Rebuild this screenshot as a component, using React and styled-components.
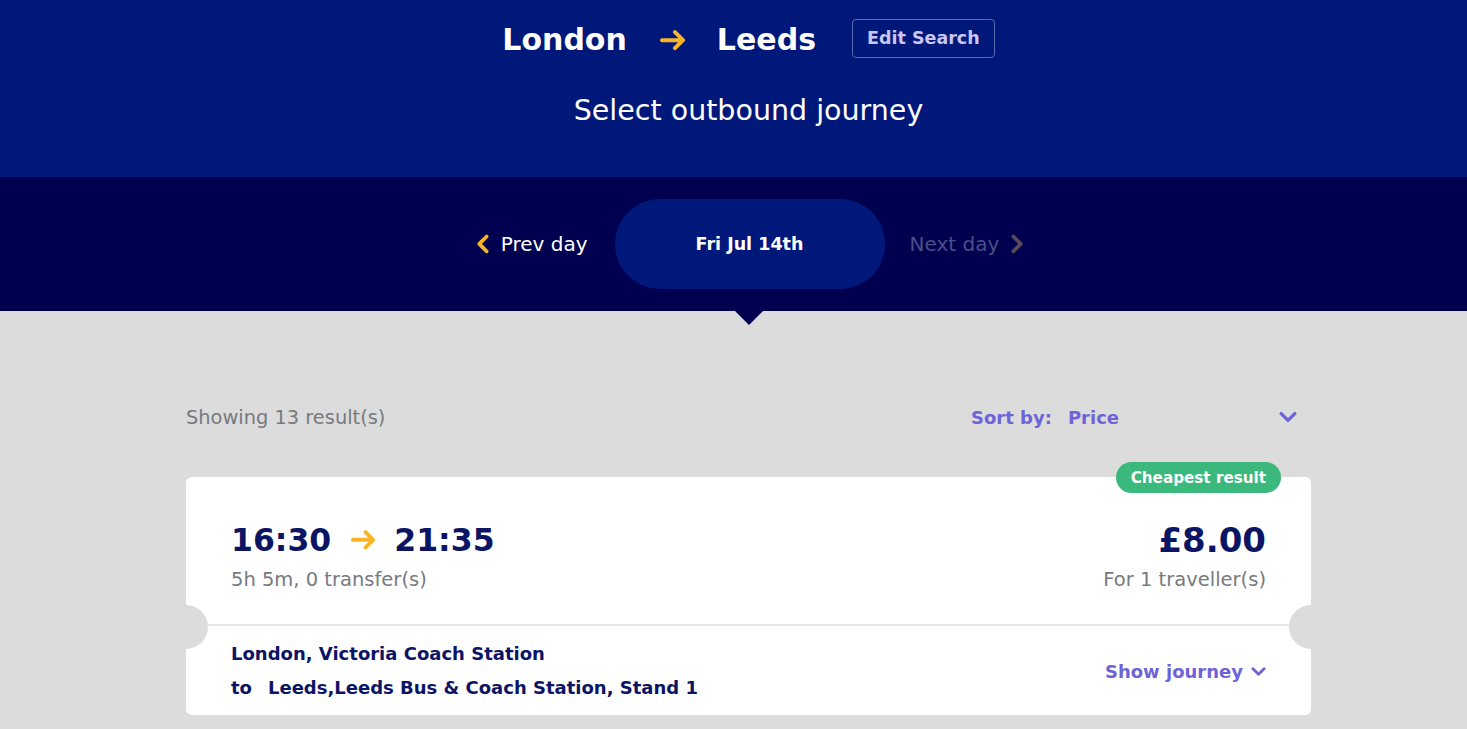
import React from "react";
import styled, { createGlobalStyle } from "styled-components";

const Global = createGlobalStyle`
  html, body { margin: 0; padding: 0; overflow: hidden; background: #dcdcdc; }
  body { font-family: "DejaVu Sans", "Open Sans", sans-serif; }
`;

const Page = styled.div`
  width: 1497px;
  min-height: 729px;
  background: #dcdcdc;
`;

const Hero = styled.header`
  background: #00187a;
  height: 177px;
  display: flex;
  flex-direction: column;
  align-items: center;
  padding-top: 18px;
  box-sizing: border-box;
`;

const RouteRow = styled.div`
  display: flex;
  align-items: center;
  height: 40px;
`;

const City = styled.h1`
  margin: 0;
  font-size: 30px;
  line-height: 40px;
  font-weight: 700;
  color: #fff;
  position: relative;
  top: 2px;
`;

const ArrowWrap = styled.span`
  display: inline-flex;
  margin: ${(p) => p.$top || 0}px ${(p) => p.$left || 30}px 0 ${(p) => p.$right || 30}px;
`;

const EditButton = styled.button`
  margin-left: 36px;
  height: 39px;
  padding: 0 14px;
  background: transparent;
  border: 1px solid #5b68b4;
  border-radius: 4px;
  color: #c9c6f6;
  font-family: inherit;
  font-size: 17.5px;
  font-weight: 700;
`;

const Subtitle = styled.h2`
  margin: 35px 0 0;
  font-size: 28.5px;
  line-height: 36px;
  font-weight: 400;
  color: #fff;
`;

const DayBar = styled.nav`
  position: relative;
  background: #000050;
  height: 134px;
  display: flex;
  align-items: center;
  justify-content: center;
`;

const DayLink = styled.span`
  display: inline-flex;
  align-items: center;
  gap: 9px;
  font-size: 20px;
  color: ${(p) => (p.$disabled ? "#4a4f85" : "#fff")};
  width: 150px;
  justify-content: ${(p) => (p.$end ? "flex-start" : "flex-end")};
  padding: ${(p) => (p.$end ? "0 0 0 25px" : "0 27px 0 0")};
`;

const DayPill = styled.div`
  width: 270px;
  height: 90px;
  border-radius: 45px;
  background: #00187a;
  color: #fff;
  font-size: 17.5px;
  font-weight: 700;
  display: flex;
  align-items: center;
  justify-content: center;
`;

const Pointer = styled.span`
  position: absolute;
  left: 50%;
  bottom: -14px;
  transform: translateX(-50%);
  width: 0;
  height: 0;
  border-left: 14px solid transparent;
  border-right: 14px solid transparent;
  border-top: 14px solid #000050;
`;

const Results = styled.main`
  width: 1125px;
  margin: 0 auto;
  padding-top: 92px;
`;

const ResultsHead = styled.div`
  display: flex;
  justify-content: space-between;
  align-items: center;
  height: 28px;
`;

const Count = styled.span`
  font-size: 19.4px;
  color: #777a80;
`;

const Sort = styled.div`
  display: flex;
  align-items: center;
  width: 340px;
  color: #6e64d8;
  font-size: 18px;
  font-weight: 700;
  padding-right: 14px;
  box-sizing: border-box;
`;

const SortValue = styled.span`
  margin-left: 16px;
  flex: 1;
`;

const Card = styled.article`
  position: relative;
  margin-top: 46px;
  background: #fff;
  border-radius: 6px;
`;

const Badge = styled.span`
  position: absolute;
  top: -15px;
  right: 30px;
  height: 31px;
  padding: 0 15px;
  border-radius: 16px;
  background: #3bb87b;
  color: #fff;
  font-size: 15.2px;
  font-weight: 700;
  display: flex;
  align-items: center;
`;

const CardTop = styled.div`
  display: flex;
  justify-content: space-between;
  padding: 41px 23px 0;
  height: 149px;
  box-sizing: border-box;
  border-bottom: 2px solid #e6e6e6;
  margin: 0 22px;
`;

const Column = styled.div`
  display: flex;
  flex-direction: column;
  align-items: ${(p) => (p.$right ? "flex-end" : "flex-start")};
`;

const Big = styled.div`
  display: flex;
  align-items: center;
  font-size: ${(p) => p.$size || 32}px;
  font-weight: 700;
  color: #0c1464;
  line-height: 44px;
`;

const Muted = styled.div`
  margin-top: 6px;
  font-size: 19.5px;
  line-height: 24px;
  color: #777a80;
`;

const Notch = styled.span`
  position: absolute;
  top: 128px;
  ${(p) => (p.$right ? "right: -22px;" : "left: -22px;")}
  width: 44px;
  height: 44px;
  border-radius: 50%;
  background: #dcdcdc;
`;

const CardBottom = styled.div`
  display: flex;
  justify-content: space-between;
  align-items: center;
  padding: 16px 45px 15px;
`;

const Stops = styled.div`
  display: flex;
  flex-direction: column;
  gap: 10px;
  font-size: 18px;
  line-height: 24px;
  font-weight: 700;
  color: #0c1464;
`;

const ToWord = styled.span`
  margin-right: 16px;
`;

const ShowJourney = styled.span`
  display: inline-flex;
  align-items: center;
  gap: 8px;
  color: #6e64d8;
  font-size: 18px;
  font-weight: 700;
`;

const Arrow = ({ size = 28 }) => (
  <svg width={size} height={size * 0.8} viewBox="0 0 28 22" fill="none">
    <path d="M2 11h21M15 3l8 8-8 8" stroke="#f8b427" strokeWidth="4" strokeLinecap="round" strokeLinejoin="round" />
  </svg>
);

const Chevron = ({ dir = "down", color, size = 14, w = 3 }) => {
  const d = {
    down: "M2 5l6 6 6-6",
    left: "M11 2L4 9l7 7",
    right: "M5 2l7 7-7 7",
  }[dir];
  const vb = dir === "down" ? "0 0 16 16" : "0 0 16 18";
  return (
    <svg width={size} height={dir === "down" ? size : size * 1.4} viewBox={vb} fill="none">
      <path d={d} stroke={color} strokeWidth={w} strokeLinecap="round" strokeLinejoin="round" />
    </svg>
  );
};

export default function App() {
  return (
    <Page>
      <Global />
      <Hero>
        <RouteRow>
          <City>London</City>
          <ArrowWrap $right={33} $left={29} $top={4}>
            <Arrow size={28} />
          </ArrowWrap>
          <City>Leeds</City>
          <EditButton>Edit Search</EditButton>
        </RouteRow>
        <Subtitle>Select outbound journey</Subtitle>
      </Hero>
      <DayBar>
        <DayLink>
          <Chevron dir="left" color="#f8b427" size={17} w={3.5} />
          Prev day
        </DayLink>
        <DayPill>Fri Jul 14th</DayPill>
        <DayLink $disabled $end>
          Next day
          <Chevron dir="right" color="#5a4a55" size={17} w={3.5} />
        </DayLink>
        <Pointer />
      </DayBar>
      <Results>
        <ResultsHead>
          <Count>Showing 13 result(s)</Count>
          <Sort>
            Sort by:
            <SortValue>Price</SortValue>
            <Chevron dir="down" color="#6e64d8" size={18} w={3} />
          </Sort>
        </ResultsHead>
        <Card>
          <Badge>Cheapest result</Badge>
          <Notch />
          <Notch $right />
          <CardTop>
            <Column>
              <Big $size={31.5}>
                16:30
                <ArrowWrap $right={20} $left={16}>
                  <Arrow size={27} />
                </ArrowWrap>
                21:35
              </Big>
              <Muted>5h 5m, 0 transfer(s)</Muted>
            </Column>
            <Column $right>
              <Big $size={34}>£8.00</Big>
              <Muted>For 1 traveller(s)</Muted>
            </Column>
          </CardTop>
          <CardBottom>
            <Stops>
              <span>London, Victoria Coach Station</span>
              <span>
                <ToWord>to</ToWord>Leeds,Leeds Bus &amp; Coach Station, Stand 1
              </span>
            </Stops>
            <ShowJourney>
              Show journey
              <Chevron dir="down" color="#6e64d8" size={15} w={3} />
            </ShowJourney>
          </CardBottom>
        </Card>
      </Results>
    </Page>
  );
}
